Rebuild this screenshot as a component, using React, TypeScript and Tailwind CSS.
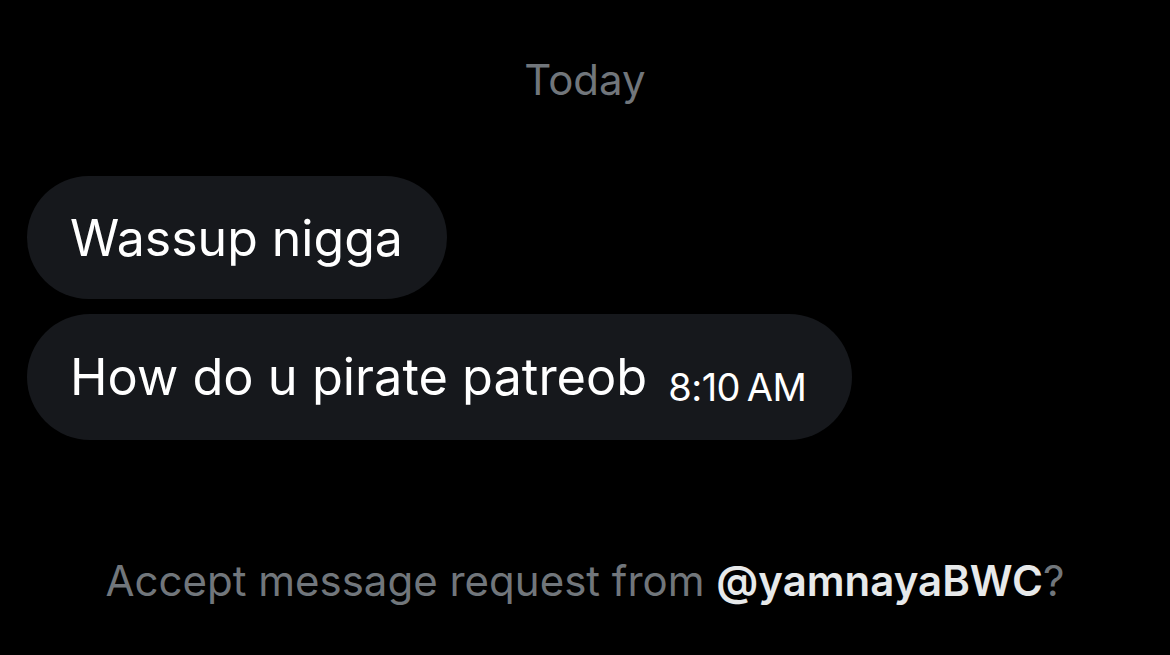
export default function App() {
  return (
    <div
      className="w-[1170px] h-[655px] bg-black overflow-hidden flex flex-col"
      style={{ fontFamily: 'Inter, "Noto Sans", sans-serif' }}
    >
      <div className="pt-[56px] flex justify-center">
        <span className="text-[42px] leading-[48px] text-[#71767b]">Today</span>
      </div>

      <div className="mt-[72px] pl-[27px] flex flex-col items-start gap-[15px]">
        <div className="h-[123px] rounded-full bg-[#16181c] pl-[43px] pr-[44px] flex items-center">
          <span className="text-[50px] leading-none text-white">Wassup nigga</span>
        </div>
        <div className="h-[126px] rounded-full bg-[#16181c] pl-[43px] pr-[46px] flex items-center">
          <span className="text-[50.5px] leading-none text-white">How do u pirate patreob</span>
          <span className="ml-[21px] mt-[20px] text-[38px] leading-none text-white tracking-[-0.5px]">
            8:10<span className="tracking-normal ml-[-4px]"> </span>AM
          </span>
        </div>
      </div>

      <div className="mt-[120px] flex justify-center">
        <p className="text-[42px] leading-none text-[#71767b]">
          Accept message request from{' '}
          <span className="font-semibold text-[#e7e9ea]">@yamnayaBWC</span>?
        </p>
      </div>
    </div>
  );
}
